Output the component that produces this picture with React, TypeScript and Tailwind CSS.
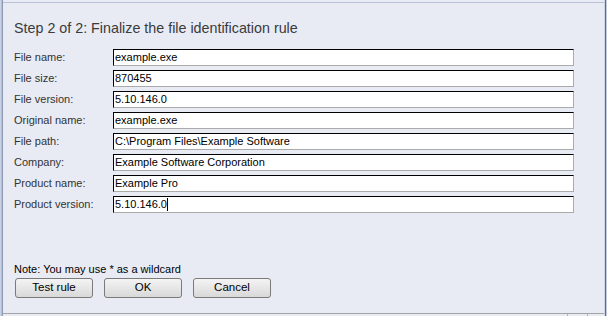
import React from 'react';

const FIELDS: { label: string; value: string; caret?: boolean }[] = [
  { label: 'File name:', value: 'example.exe' },
  { label: 'File size:', value: '870455' },
  { label: 'File version:', value: '5.10.146.0' },
  { label: 'Original name:', value: 'example.exe' },
  { label: 'File path:', value: 'C:\\Program Files\\Example Software' },
  { label: 'Company:', value: 'Example Software Corporation' },
  { label: 'Product name:', value: 'Example Pro' },
  { label: 'Product version:', value: '5.10.146.0', caret: true },
];

function Field({ label, value, caret }: { label: string; value: string; caret?: boolean }) {
  return (
    <div className="flex items-center h-[17px]">
      <div className="w-[99px] text-[11px] text-[#333] leading-none">{label}</div>
      <div className="w-[461px] h-[17px] bg-white border-t border-l border-t-black border-l-black border-r border-b border-r-[#ababab] border-b-[#ababab] flex items-center pl-[1px]">
        <span className="text-[11px] text-black leading-none">{value}</span>
        {caret && <span className="w-px h-[13px] bg-black" />}
      </div>
    </div>
  );
}

function WinButton({ children }: { children: React.ReactNode }) {
  return (
    <button className="w-[78px] h-[20px] rounded-[3px] border border-[#7a7a7a] bg-gradient-to-b from-[#f4f4f4] to-[#d9d9d9] text-[11.5px] text-black leading-none flex items-center justify-center">
      {children}
    </button>
  );
}

export default function App() {
  return (
    <div className="w-[607px] h-[316px] flex bg-[#e8ebf4] font-['Liberation_Sans',Arial,sans-serif]">
      {/* left window frame */}
      <div className="w-[3px] bg-gradient-to-r from-[#d5dcec] to-[#a9b6cf] border-r border-[#8d9ab5]" />

      <div className="flex-1 flex flex-col">
        <div className="mt-[2px] border-t border-[#b8c0d8]" />

        <div className="flex-1 flex flex-col pl-[11px]">
          <h1 className="mt-[17px] text-[14.3px] leading-[17px] text-[#3a3a3a]">
            Step 2 of 2: Finalize the file identification rule
          </h1>

          <div className="mt-[12px] flex flex-col gap-[4px]">
            {FIELDS.map((f) => (
              <Field key={f.label} {...f} />
            ))}
          </div>

          <div className="flex-1" />

          <p className="text-[11px] leading-[14px] text-black">Note: You may use * as a wildcard</p>
          <div className="mt-[2px] mb-[15px] ml-[1px] flex gap-[11px]">
            <WinButton>Test rule</WinButton>
            <WinButton>OK</WinButton>
            <WinButton>Cancel</WinButton>
          </div>
        </div>

        {/* status bar edge */}
        <div className="h-[3px] border-t border-[#a4a4a4] flex">
          <div className="w-[564px]" />
          <div className="w-px bg-[#b5b5b5]" />
          <div className="w-[19px]" />
          <div className="w-px bg-[#b5b5b5]" />
        </div>
      </div>

      {/* right window frame */}
      <div className="w-[3px] flex">
        <div className="w-px bg-[#d0d6e4]" />
        <div className="w-px bg-[#5d6b85]" />
        <div className="w-px bg-[#c3cbdd]" />
      </div>
    </div>
  );
}
